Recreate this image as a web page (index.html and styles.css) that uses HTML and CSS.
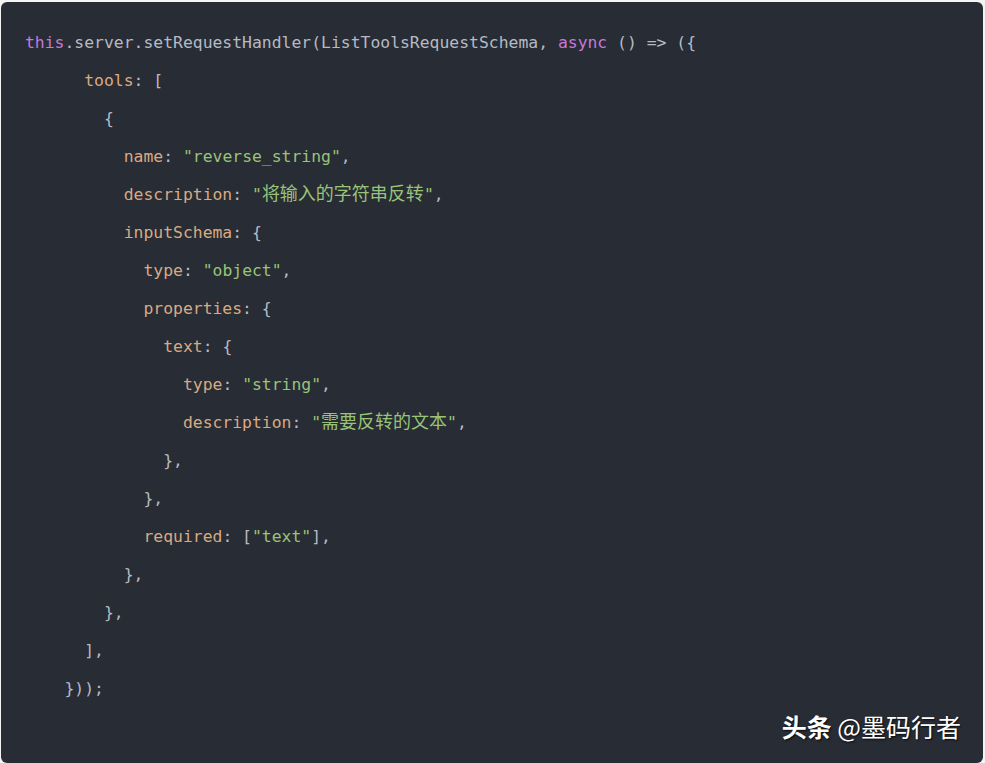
FILE: index.html
```html
<!DOCTYPE html>
<html lang="zh-CN">
<head>
<meta charset="utf-8">
<title>code</title>
<link rel="stylesheet" href="styles.css">
</head>
<body>
<div class="block">
<pre class="code"><span class="kw">this</span>.server.setRequestHandler(ListToolsRequestSchema, <span class="kw">async</span> () =&gt; ({
      <span class="prop">tools</span>: [
        {
          <span class="prop">name</span>: <span class="str">"reverse_string"</span>,
          <span class="prop">description</span>: <span class="str">"<span class="cjk">将输入的字符串反转</span>"</span>,
          <span class="prop">inputSchema</span>: {
            <span class="prop">type</span>: <span class="str">"object"</span>,
            <span class="prop">properties</span>: {
              <span class="prop">text</span>: {
                <span class="prop">type</span>: <span class="str">"string"</span>,
                <span class="prop">description</span>: <span class="str">"<span class="cjk">需要反转的文本</span>"</span>,
              },
            },
            <span class="prop">required</span>: [<span class="str">"text"</span>],
          },
        },
      ],
    }));</pre>
<div class="mark"><b class="mark-brand">头条</b> @墨码行者</div>
</div>
</body>
</html>
```
FILE: styles.css
```css
html, body {
  margin: 0;
  padding: 0;
  background: #f4f4f5;
}
body {
  width: 985px;
  height: 763px;
  overflow: hidden;
}
.block {
  position: relative;
  margin: 2px 0 0 1px;
  width: 982px;
  height: 761px;
  background: #282c34;
  border-radius: 6px;
  box-sizing: border-box;
  padding: 22px 0 0 24px;
}
.code {
  margin: 0;
  font-family: "DejaVu Sans Mono", "Liberation Mono", monospace;
  font-size: 16.4px;
  line-height: 38px;
  color: #b5bac4;
}
.kw { color: #c678dd; }
.prop { color: #d9aa82; }
.str { color: #98c379; }
.cjk {
  font-family: "Noto Sans CJK SC", sans-serif;
  font-size: 18px;
  line-height: 1;
}
.mark {
  position: absolute;
  right: 22px;
  bottom: 22px;
  font-family: "Noto Sans CJK SC", sans-serif;
  font-size: 25px;
  line-height: 30px;
  color: #ffffff;
  text-shadow: 1px 1px 2px rgba(0,0,0,0.8);
  white-space: nowrap;
}
.mark-brand {
  font-weight: 700;
}
```
